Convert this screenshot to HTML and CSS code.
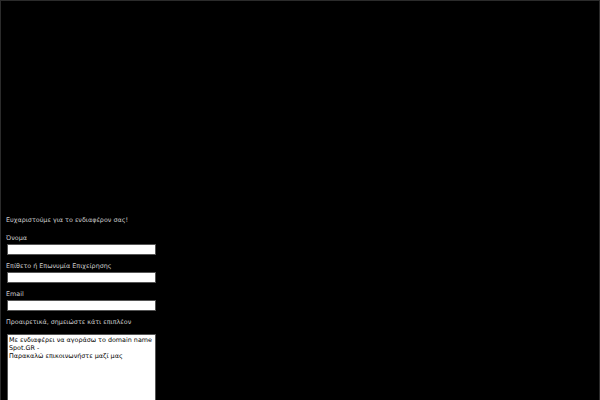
FILE: index.html
```html
<!DOCTYPE html>
<html lang="el">
<head>
<meta charset="utf-8">
<title>Spot.GR</title>
<link rel="stylesheet" href="styles.css">
</head>
<body>
<div class="frame">
  <form class="form">
    <p class="intro">Ευχαριστούμε για το ενδιαφέρον σας!</p>
    <label class="label">Όνομα</label>
    <input class="field" type="text">
    <label class="label">Επίθετο ή Επωνυμία Επιχείρησης</label>
    <input class="field" type="text">
    <label class="label">Email</label>
    <input class="field" type="text">
    <label class="label label-last">Προαιρετικά, σημειώστε κάτι επιπλέον</label>
    <textarea class="area">Με ενδιαφέρει να αγοράσω το domain name Spot.GR -
Παρακαλώ επικοινωνήστε μαζί μας</textarea>
  </form>
</div>
</body>
</html>
```
FILE: styles.css
```css
html, body {
  margin: 0;
  padding: 0;
  background: #000;
}
.frame {
  box-sizing: border-box;
  width: 600px;
  height: 400px;
  overflow: hidden;
  border: 1px solid #2b2b2b;
  border-bottom: none;
  background: #000;
  padding: 215px 0 0 5px;
}
.form {
  display: flex;
  flex-direction: column;
  align-items: flex-start;
  font-family: "DejaVu Sans", Verdana, sans-serif;
  font-size: 6.4px;
  color: #d0d0d0;
}
.intro {
  margin: 0 0 9px 0;
  line-height: 9px;
}
.label {
  line-height: 9px;
  margin-bottom: 1px;
}
.label-last {
  margin-bottom: 7px;
}
.field {
  box-sizing: border-box;
  width: 149px;
  height: 11px;
  margin: 0 0 7px 1px;
  padding: 0 2px;
  border: 1px solid #555;
  background: #fff;
  font: inherit;
}
.area {
  box-sizing: border-box;
  width: 149px;
  height: 90px;
  margin: 0 0 0 1px;
  padding: 1px 1px;
  border: 1px solid #555;
  background: #fff;
  color: #000;
  font-family: "DejaVu Sans", Verdana, sans-serif;
  font-size: 6.4px;
  line-height: 8px;
  resize: none;
}
```
